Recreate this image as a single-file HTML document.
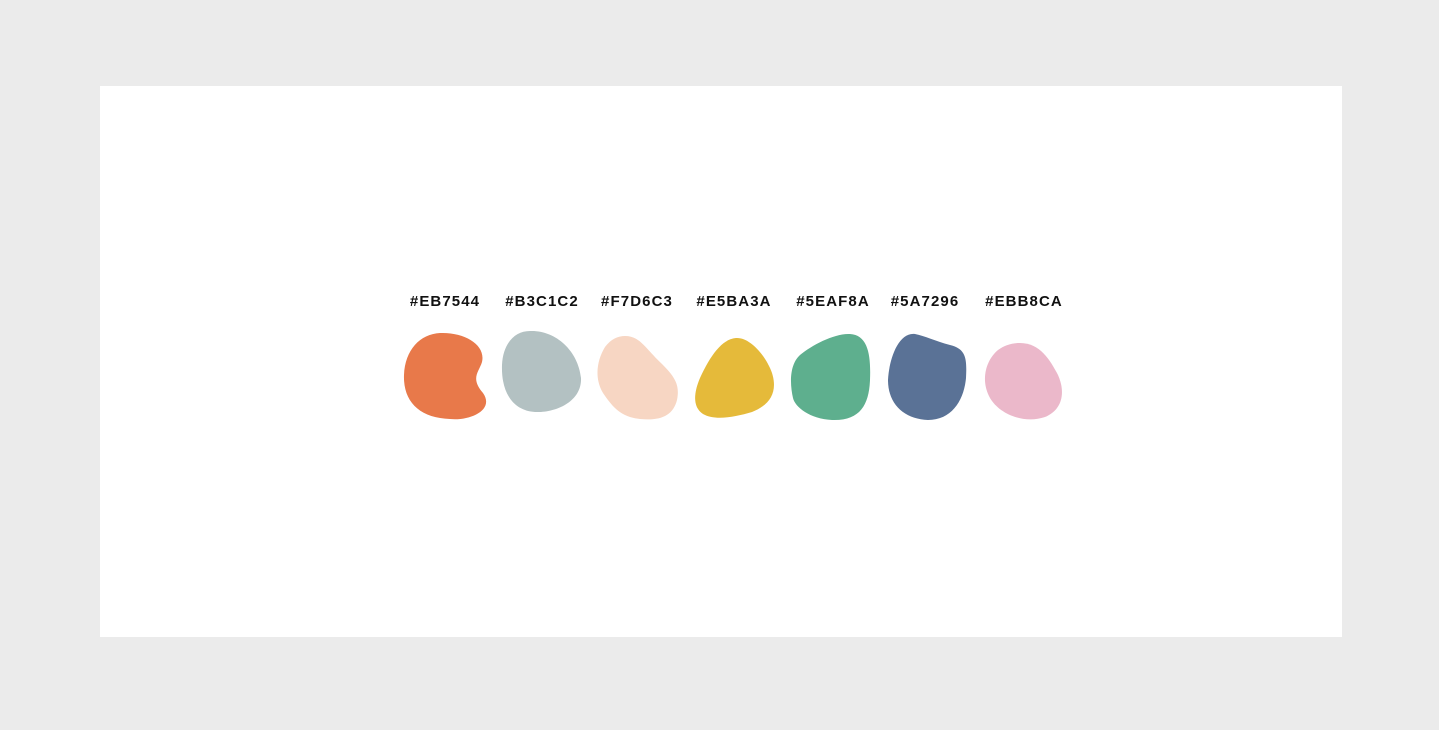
<!DOCTYPE html>
<html><head><style>
html,body{margin:0;padding:0;background:#ebebeb;width:1439px;height:730px;overflow:hidden}
svg{position:absolute;left:0;top:0}
text{font-family:"Liberation Sans",sans-serif;font-weight:bold;font-size:15px;letter-spacing:1.1px;fill:#111}
</style></head><body>
<svg width="1439" height="730" viewBox="0 0 1439 730">
<rect x="100" y="86" width="1242" height="551" fill="#fff"/>
<g text-anchor="middle">
<text x="445" y="306">#EB7544</text>
<text x="542" y="306">#B3C1C2</text>
<text x="637" y="306">#F7D6C3</text>
<text x="734" y="306">#E5BA3A</text>
<text x="833" y="306">#5EAF8A</text>
<text x="925" y="306">#5A7296</text>
<text x="1024" y="306">#EBB8CA</text>
</g>
<path fill="#E8794A" d="M440,333 C465,332 486,345 482,362 C479,372 470,378 483,393 C495,410 470,421 450,419 C420,418 403,402 404,375 C405,350 420,334 440,333Z"/>
<path fill="#B3C1C2" d="M530,331 C555,330 578,350 581,378 C582,402 555,413 535,412 C515,411 501,395 502,365 C503,343 515,331 530,331Z"/>
<path fill="#F7D6C3" d="M625,336 C640,336 645,348 662,364 C675,377 680,385 677,400 C673,416 660,421 640,419 C620,417 612,406 603,393 C594,378 597,360 605,347 C611,339 618,336 625,336Z"/>
<path fill="#E5BA3A" d="M736,338 C750,337 766,356 772,373 C778,392 770,405 752,412 C735,417 715,421 703,414 C692,407 694,392 700,378 C710,356 722,339 736,338Z"/>
<path fill="#5EAF8E" d="M850,334 C868,335 871,355 870,380 C869,405 860,421 832,420 C810,419 795,407 793,398 C790,385 789,365 800,355 C812,345 835,333 850,334Z"/>
<path fill="#5A7296" d="M915,334 C925,336 935,341 950,345 C966,349 967,358 966,378 C964,400 952,420 928,420 C905,419 888,405 888,380 C889,360 898,332 915,334Z"/>
<path fill="#EBB8CA" d="M1020,343 C1040,343 1050,360 1058,375 C1066,393 1062,410 1045,417 C1025,424 1000,415 990,398 C980,380 986,360 998,350 C1005,345 1012,343 1020,343Z"/>
</svg>
</body></html>
